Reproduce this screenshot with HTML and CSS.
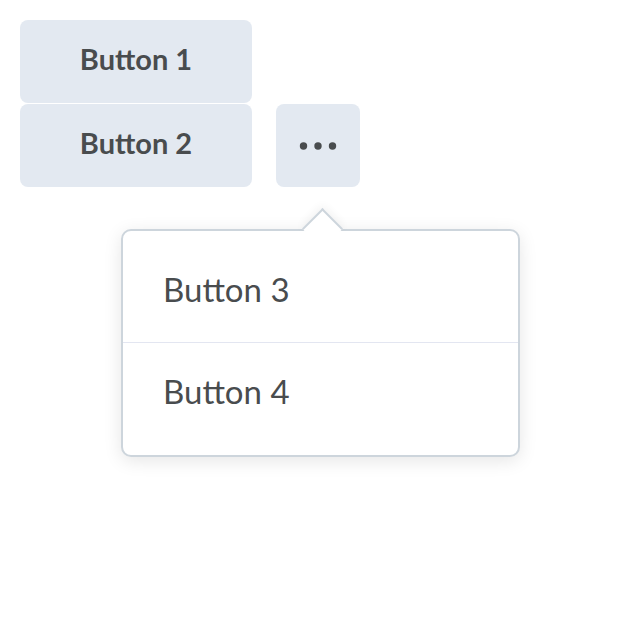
FILE: index.html
```html
<!DOCTYPE html>
<html>
<head>
<meta charset="utf-8">
<link rel="stylesheet" href="styles.css">
</head>
<body>
<div class="page">
  <button class="btn wide">Button 1</button>
  <div class="row">
    <button class="btn wide">Button 2</button>
    <button class="btn more" aria-label="More">
      <svg width="40" height="10" viewBox="0 0 40 10"><circle cx="5.5" cy="5" r="3.7" fill="#494c4e"/><circle cx="20" cy="5" r="3.7" fill="#494c4e"/><circle cx="34.5" cy="5" r="3.7" fill="#494c4e"/></svg>
    </button>
  </div>
  <div class="dropdown">
    <div class="menu">
      <div class="item">Button 3</div>
      <div class="item">Button 4</div>
    </div>
    <div class="arrow"></div>
  </div>
</div>
</body>
</html>
```
FILE: styles.css
```css
html, body {
  margin: 0;
  padding: 0;
  background: #ffffff;
}
.page {
  padding: 20px;
  display: flex;
  flex-direction: column;
  align-items: flex-start;
  gap: 1px;
  font-family: "Lato", "Liberation Sans", sans-serif;
}
.row {
  display: flex;
  gap: 24px;
}
.btn {
  border: none;
  background: #e3e9f1;
  border-radius: 8px;
  color: #494c4e;
  font-family: "Lato", "Liberation Sans", sans-serif;
  font-weight: 700;
  font-size: 29px;
  padding: 0 0 7px 0;
  height: 83px;
  display: flex;
  align-items: center;
  justify-content: center;
  margin: 0;
}
.wide {
  width: 232px;
}
.more {
  width: 84px;
  padding: 0;
}
.dropdown {
  position: relative;
  margin-top: 41px;
  margin-left: 101px;
  width: 399px;
}
.menu {
  padding: 10px 0 11px;
  background: #fff;
  border: 2px solid #cdd5dc;
  border-radius: 10px;
  box-shadow: 0 4px 18px rgba(0, 0, 0, 0.1);
}
.arrow {
  position: absolute;
  box-sizing: border-box;
  top: -15px;
  left: 187px;
  width: 29px;
  height: 29px;
  background: #fff;
  border-top: 2px solid #cdd5dc;
  border-left: 2px solid #cdd5dc;
  transform: rotate(45deg);
  clip-path: polygon(-14px -14px, 47px -14px, -14px 47px);
  box-shadow: -2px -2px 10px rgba(0, 0, 0, 0.06);
}
.item {
  padding: 28px 0 33px 40px;
  line-height: 40px;
  font-size: 33px;
  color: #494c4e;
  font-weight: 400;
}
.item + .item {
  border-top: 1px solid #e3e6f1;
}
```
